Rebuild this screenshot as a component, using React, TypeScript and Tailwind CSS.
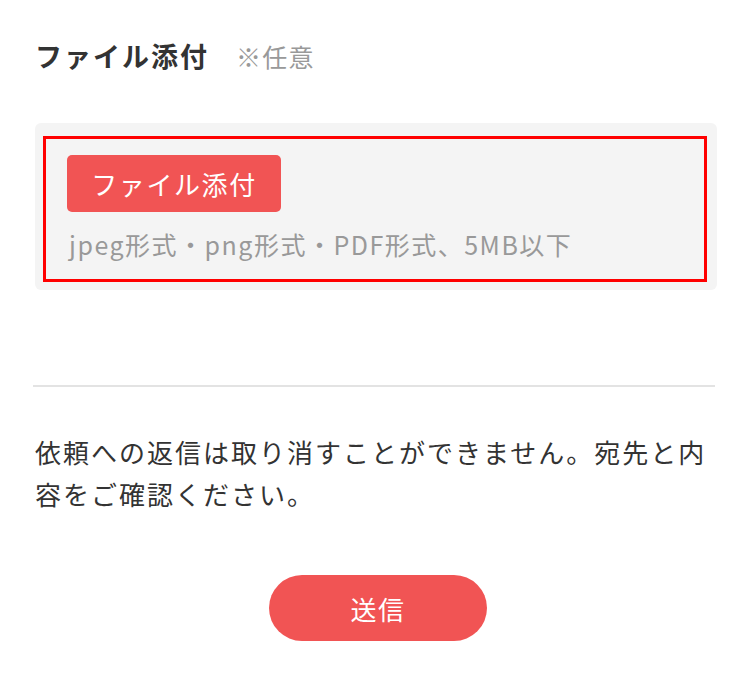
import React from "react";

export default function App() {
  return (
    <div
      className="w-[750px] h-[674px] bg-white px-[35px] pt-[36px] text-[#333]"
      style={{ fontFamily: '"Noto Sans CJK JP", "Noto Sans", sans-serif' }}
    >
      <div className="flex items-baseline">
        <h2 className="text-[27px] font-bold leading-[40px] tracking-[2px] text-[#333]">ファイル添付</h2>
        <span className="ml-[27px] text-[25px] leading-[40px] tracking-[1.2px] text-[#999]">※任意</span>
      </div>

      <div className="mt-[47px] w-[682px] rounded-[6px] bg-[#f4f4f4] pl-[8px] pr-[10px] pt-[13px] pb-[8px]">
        <div className="border-[3px] border-[#ff0000] pl-[21px] pt-[16px] pb-[17px]">
          <button className="h-[57px] w-[214px] rounded-[5px] bg-[#f15454] text-[26px] tracking-[1.6px] text-white">
            ファイル添付
          </button>
          <p className="mt-[14px] pl-[2px] text-[25px] leading-[36px] tracking-[1.5px] text-[#999]">
            jpeg形式・png形式・PDF形式、5MB以下
          </p>
        </div>
      </div>

      <div className="mt-[95px] -ml-[2px] h-[2px] w-[682px] bg-[#e3e3e3]" />

      <p className="mt-[44px] w-[680px] text-[26px] leading-[42px] tracking-[2px] text-[#333]">
        依頼への返信は取り消すことができません。宛先と内容をご確認ください。
      </p>

      <div className="mt-[60px] flex justify-center pl-[6px]">
        <button className="h-[66px] w-[218px] rounded-full bg-[#f15454] text-[26px] tracking-[1.5px] text-white">
          送信
        </button>
      </div>
    </div>
  );
}
